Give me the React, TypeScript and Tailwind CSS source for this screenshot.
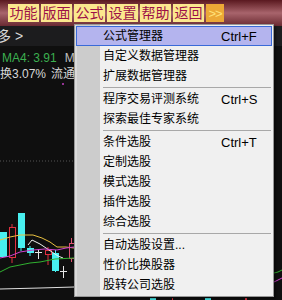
import React from "react";

const font = '"Liberation Sans", "Noto Sans CJK SC", sans-serif';

const tabs = ["功能", "版面", "公式", "设置", "帮助", "返回"];

type Item = { label: string; key?: string; active?: boolean } | "sep";

const items: Item[] = [
  { label: "公式管理器", key: "Ctrl+F", active: true },
  { label: "自定义数据管理器" },
  { label: "扩展数据管理器" },
  "sep",
  { label: "程序交易评测系统", key: "Ctrl+S" },
  { label: "探索最佳专家系统" },
  "sep",
  { label: "条件选股", key: "Ctrl+T" },
  { label: "定制选股" },
  { label: "模式选股" },
  { label: "插件选股" },
  { label: "综合选股" },
  "sep",
  { label: "自动选股设置..." },
  { label: "性价比换股器" },
  { label: "股转公司选股" },
];

function Chart() {
  // page coordinates, the svg starts at y=80
  return (
    <svg width="282" height="220" viewBox="0 80 282 220" className="block">
      <line x1="0" y1="161" x2="74" y2="161" stroke="#555" strokeDasharray="1 2" />
      <circle cx="63" cy="84" r="1" fill="#c040c0" />

      {/* candles */}
      <rect x="0" y="232" width="7" height="25" fill="#48f0f0" />
      <line x1="12" y1="224" x2="12" y2="263" stroke="#e03040" />
      <rect x="9.5" y="227.5" width="6" height="30" fill="#0f0f0f" stroke="#e03040" />
      <line x1="21" y1="213" x2="21" y2="251" stroke="#48f0f0" />
      <rect x="18" y="213" width="7" height="35" fill="#48f0f0" />
      <line x1="30" y1="246" x2="30" y2="256" stroke="#48f0f0" />
      <rect x="27" y="248" width="7" height="5" fill="#48f0f0" />
      <line x1="38.5" y1="249" x2="38.5" y2="259" stroke="#e8e8e8" />
      <line x1="35" y1="252.5" x2="42" y2="252.5" stroke="#e8e8e8" />
      <line x1="48" y1="247" x2="48" y2="265" stroke="#e03040" />
      <rect x="45.5" y="250.5" width="6" height="4" fill="#0f0f0f" stroke="#e03040" />
      <line x1="55.5" y1="250" x2="55.5" y2="272" stroke="#48f0f0" />
      <rect x="52" y="253" width="7" height="18" fill="#48f0f0" />
      <line x1="63.5" y1="266" x2="63.5" y2="278" stroke="#e8e8e8" />
      <line x1="60" y1="271.5" x2="67" y2="271.5" stroke="#e8e8e8" />
      <line x1="71.5" y1="238" x2="71.5" y2="262" stroke="#e05070" />
      <rect x="69.5" y="243.5" width="6" height="15" fill="#0f0f0f" stroke="#e05070" />

      {/* moving averages */}
      <polyline
        points="0,240 10,237 20,235 33,235 42,238 50,242 57,247 66,247 74,248"
        fill="none"
        stroke="#e8c040"
      />
      <polyline
        points="28,245 32,240 40,244 46,248 52,252 58,256 63,258"
        fill="none"
        stroke="#f0f0f0"
      />
      <polyline
        points="0,258 10,256 20,252 33,250 45,249 57,250 66,248 74,247"
        fill="none"
        stroke="#d040d0"
      />
      <polyline
        points="0,272 10,267 20,265 30,263 40,262 55,259 74,258"
        fill="none"
        stroke="#30b030"
      />
      <polyline points="0,289 40,288 74,287" fill="none" stroke="#e0e0e0" />

      {/* right of the menu */}
      <polyline points="274,273 278,272 282,270" fill="none" stroke="#30b030" />
      <polyline points="274,282 278,280 282,278" fill="none" stroke="#d040d0" />

      {/* below the menu */}
      <rect x="150" y="298" width="6" height="2" fill="#48f0f0" />
      <rect x="172" y="298" width="1" height="2" fill="#e03040" />
      <rect x="205" y="298" width="6" height="2" fill="#48f0f0" />
      <rect x="245" y="298" width="2" height="2" fill="#e03040" />
    </svg>
  );
}

function Menu() {
  return (
    <div
      className="absolute left-[74px] top-[24px] w-[200px] border border-[#979797] pt-[1px] pb-[1px] bg-[linear-gradient(to_right,#dadada_0,#dadada_2px,#cccccc_2px,#cccccc_25px,#f0f0f0_25px)] shadow-[2px_2px_2px_rgba(0,0,0,0.4)]"
      style={{ fontFamily: font }}
    >
      {items.map((it, i) =>
        it === "sep" ? (
          <div key={i} className="h-[3px] pl-[28px] pr-[2px] pt-[1px]">
            <div className="h-px bg-[#a8a8a8]" />
          </div>
        ) : (
          <div
            key={i}
            className={
              it.active
                ? "mx-[1px] h-[20px] grid grid-cols-[118px_1fr] items-center pl-[26px] border border-[#3a6ad8] bg-[#b4b4ee] text-[12px] text-black"
                : "mx-[1px] h-[20px] grid grid-cols-[118px_1fr] items-center pl-[27px] text-[12px] text-black"
            }
          >
            <span className="leading-none whitespace-nowrap">{it.label}</span>
            <span className="text-[13px] leading-none whitespace-nowrap">{it.key}</span>
          </div>
        )
      )}
    </div>
  );
}

export default function App() {
  return (
    <div
      className="relative w-[282px] h-[300px] overflow-hidden bg-[#0f0f0f]"
      style={{ fontFamily: font }}
    >
      {/* top toolbar */}
      <div className="h-[26px] flex items-center gap-[2px] pl-[8px] bg-gradient-to-b from-[#5a1820] via-[#a8646c] to-[#6a2a32]">
        {tabs.map((t) => (
          <div
            key={t}
            className="w-[31px] h-[18px] flex items-center justify-center bg-[#fbe88e] text-[#9c1048] text-[14px] leading-none"
          >
            {t}
          </div>
        ))}
        <div className="w-[18px] h-[18px] flex items-center justify-center bg-[#eca836] text-[#ffe27a] text-[13px] leading-none tracking-[-1px]">
          &gt;&gt;
        </div>
      </div>

      {/* quote area */}
      <div className="h-[20px] flex items-center bg-[#1c1c1e] text-[#d8d8d8] text-[14px] -ml-[3px]">
        <span>多</span>
        <span className="ml-[4px] text-[14px]">&gt;</span>
      </div>
      <div className="h-[18px] mt-[3px] flex items-center text-[12px] whitespace-nowrap">
        <span className="ml-[2px] text-[#3cb050]">MA4: 3.91</span>
        <span className="ml-[8px] text-[#c0c0c0]">MA</span>
      </div>
      <div className="h-[13px] flex items-center text-[12px] text-[#d8d8d8] whitespace-nowrap">
        <span>换3.07%</span>
        <span className="ml-[5px]">流通</span>
      </div>

      <Chart />
      <Menu />
    </div>
  );
}
